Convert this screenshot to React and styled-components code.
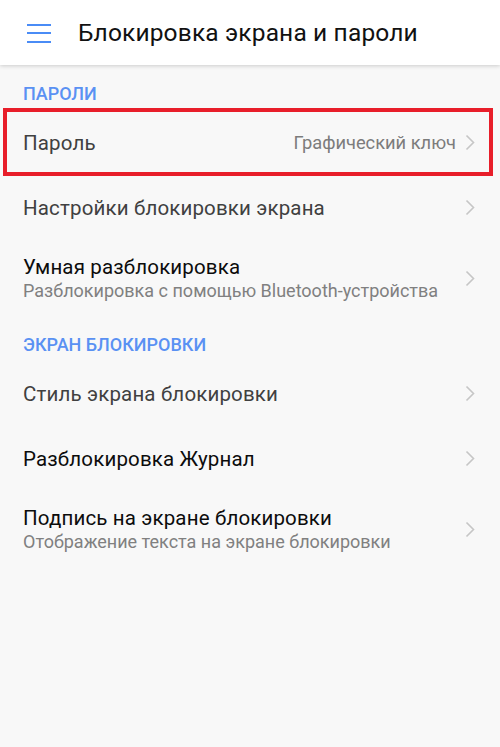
import React from 'react'
import styled, { createGlobalStyle } from 'styled-components'

const GlobalStyle = createGlobalStyle`
    html, body {
        margin: 0;
        padding: 0;
        background: #f8f8f8;
    }
    body {
        font-family: Roboto, "Noto Sans", "Liberation Sans", sans-serif;
        -webkit-font-smoothing: antialiased;
    }
`

const sections = [
    {
        title: 'ПАРОЛИ',
        items: [
            { title: 'Пароль', value: 'Графический ключ', dim: true, marked: true },
            { title: 'Настройки блокировки экрана', dim: true },
            { title: 'Умная разблокировка', sub: 'Разблокировка с помощью Bluetooth-устройства' },
        ],
    },
    {
        title: 'ЭКРАН БЛОКИРОВКИ',
        items: [
            { title: 'Стиль экрана блокировки', dim: true },
            { title: 'Разблокировка Журнал' },
            { title: 'Подпись на экране блокировки', sub: 'Отображение текста на экране блокировки' },
        ],
    },
]

const Chevron = () => (
    <svg width="10" height="17" viewBox="0 0 10 17">
        <path d="M1.5 1.5 L8.5 8.5 L1.5 15.5" fill="none" stroke="#c6c6c6" strokeWidth="1.6" />
    </svg>
)

export default function App() {
    return (
        <Page>
            <GlobalStyle />
            <Toolbar>
                <MenuButton>
                    <span /><span /><span />
                </MenuButton>
                <Title>Блокировка экрана и пароли</Title>
            </Toolbar>

            {sections.map((section) => (
                <section key={section.title}>
                    <SectionHeader>{section.title}</SectionHeader>
                    {section.items.map((item) => (
                        <Row key={item.title} tall={!!item.sub}>
                            <RowText>
                                <RowTitle dim={item.dim}>{item.title}</RowTitle>
                                {item.sub && <RowSub>{item.sub}</RowSub>}
                            </RowText>
                            {item.value && <RowValue>{item.value}</RowValue>}
                            <Chevron />
                            {item.marked && <Highlight />}
                        </Row>
                    ))}
                </section>
            ))}
        </Page>
    )
}

const Page = styled.div`
    width: 500px;
    min-height: 747px;
    background: #f8f8f8;
`

const Toolbar = styled.header`
    height: 65px;
    background: #ffffff;
    box-shadow: 0 1px 4px rgba(0, 0, 0, 0.18);
    display: flex;
    align-items: center;
    position: relative;
    z-index: 1;
`

const MenuButton = styled.div`
    width: 24px;
    margin-left: 27px;
    margin-right: 27px;
    display: flex;
    flex-direction: column;
    gap: 6.5px;
    margin-top: 1px;

    span {
        display: block;
        height: 2px;
        background: #4a8cf6;
    }
`

const Title = styled.h1`
    margin: 0;
    font-size: 24.5px;
    font-weight: 400;
    color: #111111;
    letter-spacing: 0.15px;
`

const SectionHeader = styled.div`
    height: 45px;
    box-sizing: border-box;
    padding: 18px 23px 0;
    font-size: 18px;
    font-weight: 500;
    color: #5a91f3;
`

const Row = styled.div`
    position: relative;
    height: ${(p) => (p.tall ? '76px' : '65px')};
    box-sizing: border-box;
    padding: 0 25px 0 23px;
    display: flex;
    align-items: center;
    gap: 9px;

    svg {
        flex-shrink: 0;
    }
`

const RowText = styled.div`
    flex: 1;
    display: flex;
    flex-direction: column;
    gap: 1px;
    min-width: 0;
`

const RowTitle = styled.div`
    font-size: 20.5px;
    letter-spacing: 0.15px;
    color: ${(p) => (p.dim ? '#404040' : '#0c0c0c')};
    white-space: nowrap;
`

const RowSub = styled.div`
    font-size: 18px;
    color: #808080;
    white-space: nowrap;
`

const RowValue = styled.div`
    font-size: 18.3px;
    color: #7c7c7c;
    white-space: nowrap;
`

const Highlight = styled.div`
    position: absolute;
    left: 3px;
    right: 7px;
    top: -2px;
    bottom: -1px;
    border: 4px solid #e81e2a;
    pointer-events: none;
`
